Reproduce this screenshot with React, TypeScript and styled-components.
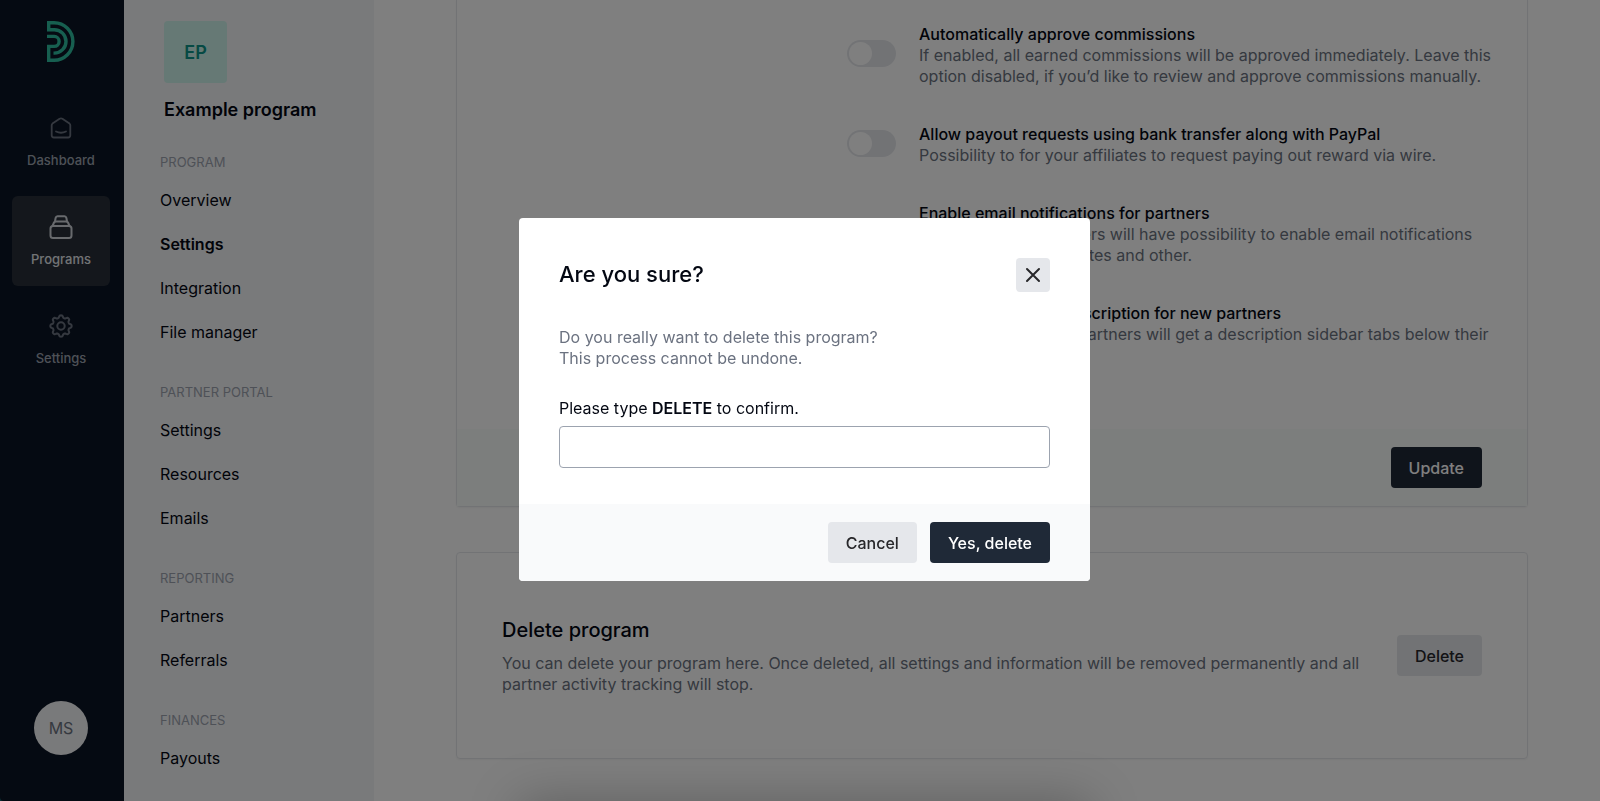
import React from "react";
import styled, { createGlobalStyle, css } from "styled-components";

const GlobalStyle = createGlobalStyle`
  *, *::before, *::after { box-sizing: border-box; }
  body { margin: 0; background: #14606c; font-family: Inter, "Liberation Sans", sans-serif; font-size: 16px; color: #030712; overflow: hidden; }
  button, input { font: inherit; }
  h1, h2, h3, p, ul { margin: 0; padding: 0; font-weight: inherit; font-size: inherit; }
  a { color: inherit; text-decoration: none; }
`;

const Page = styled.div`
  display: flex;
  height: 100vh;
  overflow: hidden;
`;

const Rail = styled.nav`
  flex: 0 0 124px;
  display: flex;
  flex-direction: column;
  align-items: center;
  padding: 21px 14px 46px 12px;
  border-bottom-left-radius: 4px;
  background: #0b1524;
`;

const RailList = styled.div`
  display: flex;
  flex-direction: column;
  gap: 9px;
  width: 100%;
  margin: 35px 0 auto;
`;

const RailLink = styled.a<{ $active?: boolean }>`
  display: flex;
  flex-direction: column;
  align-items: center;
  gap: 10px;
  height: 90px;
  padding-top: 19px;
  border-radius: 6px;
  font-size: 13px;
  line-height: 20px;
  font-weight: 500;
  color: #9ca3af;
  svg { color: #6b7280; }
  ${(p) => p.$active && css`
    background: #282f39;
    color: #e5e7eb;
    svg { color: #d1d5db; }
  `}
`;

const RailIcon = styled.span`
  display: grid;
  place-items: center;
  height: 24px;
`;

const Avatar = styled.button`
  width: 54px;
  height: 54px;
  padding: 0;
  border: 0;
  border-radius: 50%;
  background: #f3f4f6;
  color: #6b7280;
`;

const SubNav = styled.nav`
  flex: 0 0 250px;
  padding: 21px 12px 0 36px;
  background: #f3f4f6;
`;

const ProgramHead = styled.div`
  display: flex;
  flex-direction: column;
  gap: 15px;
  padding-left: 4px;
  margin-bottom: 30px;
`;

const ProgramBadge = styled.div`
  display: grid;
  place-items: center;
  width: 63px;
  height: 62px;
  border-radius: 4px;
  background: #ccf3ea;
  color: #0d9488;
  font-size: 18px;
  font-weight: 600;
`;

const ProgramName = styled.h1`
  font-size: 18px;
  line-height: 24px;
  font-weight: 600;
`;

const NavGroup = styled.section`
  margin-bottom: 28px;
`;

const NavHeading = styled.h2`
  margin-bottom: 6px;
  font-size: 13px;
  line-height: 20px;
  color: #9ca3af;
`;

const NavItem = styled.a<{ $active?: boolean }>`
  display: block;
  line-height: 44px;
  font-weight: ${(p) => (p.$active ? 600 : 400)};
`;

const Main = styled.main`
  flex: 1;
  min-width: 0;
  padding: 0 72px 0 82px;
  background: #fff;
`;

const Card = styled.section<{ $continued?: boolean }>`
  border: 1px solid #e5e7eb;
  border-radius: 4px;
  box-shadow: 0 1px 2px rgba(0, 0, 0, 0.05);
  ${(p) => p.$continued && css`
    border-top: 0;
    border-top-left-radius: 0;
    border-top-right-radius: 0;
    margin-bottom: 45px;
  `}
`;

const OptionList = styled.div`
  display: flex;
  flex-direction: column;
  gap: 36px;
  padding: 23px 34px 63px 390px;
`;

const Option = styled.div`
  display: flex;
  align-items: center;
  gap: 23px;
`;

const Switch = styled.input`
  appearance: none;
  flex: 0 0 49px;
  height: 27px;
  margin: 0 0 3px;
  padding: 2px;
  border-radius: 14px;
  background: #e5e7eb;
  &::before {
    content: "";
    display: block;
    width: 23px;
    height: 23px;
    border-radius: 50%;
    background: #fff;
  }
`;

const OptionTitle = styled.label`
  display: block;
  line-height: 22px;
  font-weight: 500;
`;

const Copy = styled.p`
  line-height: 21px;
  color: #6b7280;
`;

const CardFooter = styled.footer`
  display: flex;
  justify-content: flex-end;
  padding: 18px 45px;
  background: #f9fdfb;
`;

const Button = styled.button<{ $primary?: boolean }>`
  flex: none;
  height: 41px;
  padding: 0 18px;
  border: 0;
  border-radius: 4px;
  font-weight: 500;
  background: ${(p) => (p.$primary ? "#1f2937" : "#e5e7eb")};
  color: ${(p) => (p.$primary ? "#fff" : "#27272a")};
`;

const DangerBody = styled.div`
  display: flex;
  align-items: center;
  justify-content: space-between;
  gap: 28px;
  padding: 63px 45px;
`;

const SectionTitle = styled.h2`
  margin-bottom: 9px;
  font-size: 20px;
  line-height: 28px;
  font-weight: 500;
`;

const Overlay = styled.div`
  position: fixed;
  inset: 0;
  display: flex;
  align-items: center;
  justify-content: center;
  padding: 0 0 2px 9px;
  background: rgba(0, 0, 0, 0.5);
`;

const OffscreenShadow = styled.div`
  position: absolute;
  top: 100%;
  left: 50%;
  width: 571px;
  height: 60px;
  margin-left: -281px;
  box-shadow: 0 0 50px rgba(0, 0, 0, 0.25);
`;

const Dialog = styled.form`
  width: 571px;
  border-radius: 4px;
  overflow: hidden;
  background: #fff;
`;

const DialogBody = styled.div`
  padding: 40px 40px 36px;
`;

const DialogHead = styled.header`
  display: flex;
  align-items: flex-start;
  justify-content: space-between;
  margin-bottom: 35px;
`;

const DialogTitle = styled.h2`
  font-size: 22px;
  line-height: 32px;
  font-weight: 500;
`;

const CloseButton = styled.button`
  display: grid;
  place-items: center;
  width: 34px;
  height: 34px;
  padding: 0;
  border: 0;
  border-radius: 4px;
  background: #e5e7eb;
  color: #27272a;
`;

const FieldLabel = styled.label`
  display: block;
  margin: 28px 0 7px;
  line-height: 22px;
  b { font-weight: 600; }
`;

const TextInput = styled.input`
  display: block;
  width: 100%;
  height: 42px;
  padding: 0 12px;
  border: 1px solid #9ca3af;
  border-radius: 4px;
  background: #fff;
`;

const DialogFooter = styled.footer`
  display: flex;
  justify-content: flex-end;
  gap: 13px;
  padding: 18px 40px;
  background: #f9fafb;
`;

const Logo = () => (
  <svg width="28" height="41" viewBox="0 0 28 41" fill="none" stroke="#2fbfa0" strokeWidth="3.4" aria-hidden="true">
    <path d="M6.500 32.100H7.300A11.700 11.700 0 0 0 7.300 8.700H1.700V1.700H7.100A18.800 18.800 0 0 1 7.100 39.300H1.700V25.400H7.100A5 5 0 0 0 7.100 15.400H0" />
  </svg>
);

const stroke = { fill: "none", stroke: "currentColor", strokeWidth: 2, strokeLinecap: "round", strokeLinejoin: "round" } as const;

const HomeIcon = () => (
  <svg width="22" height="22" viewBox="0 0 22 22" {...stroke} strokeWidth={1.8} aria-hidden="true">
    <path d="M1.700 8.200Q1.700 7.200 2.500 6.600L9.600 1.700Q11 .9 12.400 1.700L19.500 6.600Q20.300 7.200 20.300 8.200V18.300Q20.300 20.500 18.100 20.500H3.900Q1.700 20.500 1.700 18.300Z" />
    <path d="M6 14.500Q11 17 16 14.500" />
  </svg>
);

const StackIcon = () => (
  <svg width="24" height="24" viewBox="0 0 24 24" {...stroke} aria-hidden="true">
    <rect x="1.500" y="11" width="21" height="12" rx="2.500" />
    <path d="M3.500 11L5 7.500Q5.300 6.500 6.500 6.500H17.500Q18.700 6.500 19 7.500L20.500 11" />
    <path d="M6 6.500L6.600 3Q7 1.200 8.500 1.200H15.500Q17 1.200 17.400 3L18 6.500" />
  </svg>
);

const gear = (() => {
  const pts: string[] = [];
  for (let i = 0; i <= 96; i++) {
    const a = (i / 96) * Math.PI * 2 - Math.PI / 2;
    const r = 9.5 + 1.2 * Math.tanh(1.8 * Math.cos(8 * (a + Math.PI / 2)));
    pts.push(`${(12 + r * Math.cos(a)).toFixed(2)} ${(12 + r * Math.sin(a)).toFixed(2)}`);
  }
  return `M${pts.join("L")}Z`;
})();

const GearIcon = () => (
  <svg width="24" height="24" viewBox="0 0 24 24" {...stroke} aria-hidden="true">
    <path d={gear} />
    <circle cx="12" cy="12" r="3.700" />
  </svg>
);

const CloseIcon = () => (
  <svg width="16" height="16" viewBox="0 0 16 16" {...stroke} aria-hidden="true">
    <path d="M2 2L14 14M14 2L2 14" />
  </svg>
);

const groups = [
  { title: "PROGRAM", items: ["Overview", "Settings", "Integration", "File manager"], active: "Settings" },
  { title: "PARTNER PORTAL", items: ["Settings", "Resources", "Emails"] },
  { title: "REPORTING", items: ["Partners", "Referrals"] },
  { title: "FINANCES", items: ["Payouts"] },
];

const options = [
  {
    id: "auto-approve",
    title: "Automatically approve commissions",
    text: "If enabled, all earned commissions will be approved immediately. Leave this option disabled, if you’d like to review and approve commissions manually.",
  },
  {
    id: "bank-transfer",
    title: "Allow payout requests using bank transfer along with PayPal",
    text: "Possibility to for your affiliates to request paying out reward via wire.",
  },
  {
    id: "email-notifications",
    title: "Enable email notifications for partners",
    text: "If enabled, your partners will have possibility to enable email notifications about new sales, updates and other.",
  },
  {
    id: "description",
    title: "Show the program description for new partners",
    text: "If enabled, your new partners will get a description sidebar tabs below their referral link.",
  },
];

export default function App() {
  return (
    <>
      <GlobalStyle />
      <Page>
        <Rail aria-label="Main">
          <Logo />
          <RailList>
            <RailLink href="#dashboard"><RailIcon><HomeIcon /></RailIcon>Dashboard</RailLink>
            <RailLink href="#programs" $active><RailIcon><StackIcon /></RailIcon>Programs</RailLink>
            <RailLink href="#settings"><RailIcon><GearIcon /></RailIcon>Settings</RailLink>
          </RailList>
          <Avatar type="button">MS</Avatar>
        </Rail>
        <SubNav aria-label="Program">
          <ProgramHead>
            <ProgramBadge>EP</ProgramBadge>
            <ProgramName>Example program</ProgramName>
          </ProgramHead>
          {groups.map((g) => (
            <NavGroup key={g.title}>
              <NavHeading>{g.title}</NavHeading>
              {g.items.map((item) => (
                <NavItem key={item} href="#" $active={g.active === item}>{item}</NavItem>
              ))}
            </NavGroup>
          ))}
        </SubNav>
        <Main>
          <Card $continued>
            <OptionList>
              {options.map((o) => (
                <Option key={o.id}>
                  <Switch type="checkbox" role="switch" id={o.id} />
                  <div>
                    <OptionTitle htmlFor={o.id}>{o.title}</OptionTitle>
                    <Copy>{o.text}</Copy>
                  </div>
                </Option>
              ))}
            </OptionList>
            <CardFooter><Button type="button" $primary>Update</Button></CardFooter>
          </Card>
          <Card>
            <DangerBody>
              <div>
                <SectionTitle>Delete program</SectionTitle>
                <Copy>You can delete your program here. Once deleted, all settings and information will be removed permanently and all partner activity tracking will stop.</Copy>
              </div>
              <Button type="button">Delete</Button>
            </DangerBody>
          </Card>
        </Main>
      </Page>
      <Overlay>
        <OffscreenShadow />
        <Dialog role="dialog" aria-modal="true" aria-labelledby="dialog-title">
          <DialogBody>
            <DialogHead>
              <DialogTitle id="dialog-title">Are you sure?</DialogTitle>
              <CloseButton type="button" aria-label="Close"><CloseIcon /></CloseButton>
            </DialogHead>
            <Copy>Do you really want to delete this program?<br />This process cannot be undone.</Copy>
            <FieldLabel htmlFor="confirm">Please type <b>DELETE</b> to confirm.</FieldLabel>
            <TextInput id="confirm" type="text" />
          </DialogBody>
          <DialogFooter>
            <Button type="button">Cancel</Button>
            <Button type="submit" $primary>Yes, delete</Button>
          </DialogFooter>
        </Dialog>
      </Overlay>
    </>
  );
}
